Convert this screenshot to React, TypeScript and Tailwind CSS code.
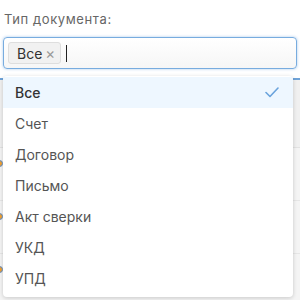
const options = ["Все", "Счет", "Договор", "Письмо", "Акт сверки", "УКД", "УПД"]

export default function App() {
    const selected = "Все"

    return (
        <div className="relative w-[300px] h-[300px] overflow-hidden bg-white font-['Inter','Noto_Sans',sans-serif]">
            {/* Field */}
            <div className="px-[3px] pt-[9px]">
                <label className="block pl-[1px] text-[13px] leading-[20px] text-[#666] tracking-[0.6px]">
                    Тип документа:
                </label>
                <div className="mt-[8px] h-[32px] flex items-center gap-[5px] pl-[4px] rounded-[4px] border border-[#78acdf] bg-gradient-to-b from-white to-[#f6f6f6] shadow-[0_0_3px_rgba(110,165,225,0.6)]">
                    <span className="flex items-center h-[22px] pl-[8px] pr-[5px] gap-[3px] rounded-[3px] border border-[#dedede] bg-[#f1f1f1] text-[14px] text-[#333]">
                        Все
                        <span className="text-[15px] text-[#999] leading-none">×</span>
                    </span>
                    <span className="w-[1px] h-[17px] bg-[#222]" />
                </div>
            </div>

            {/* Table underneath */}
            <div className="mt-[9px]">
                <div className="h-[2px] bg-[#6fa3d8]" />
                <div className="h-[68px] bg-[#f0f0f0] border-b border-[#e2e2e2]" />
                {[0, 1, 2].map((i) => (
                    <div key={i} className="relative h-[53px] border-b border-[#e6e6e6] bg-[#f4f4f4]">
                        <span className="absolute left-[-4px] top-[12px] w-[7px] h-[7px] rounded-full bg-[#f0a030] border border-[#5b8fd0]" />
                    </div>
                ))}
            </div>

            {/* Dropdown */}
            <div className="absolute left-[3px] top-[76px] w-[290px] h-[221px] bg-white rounded-[4px] shadow-[0_1px_4px_rgba(0,0,0,0.18)] overflow-hidden py-[1px]">
                {options.map((o) => (
                    <div
                        key={o}
                        className={
                            o === selected
                                ? "flex items-center justify-between h-[31px] pl-[12px] pr-[14px] bg-[#eef7ff] text-[14px] text-[#333] font-medium"
                                : "flex items-center h-[31px] pl-[12px] text-[14px] text-[#555]"
                        }
                    >
                        {o}
                        {o === selected && (
                            <svg width="14" height="11" viewBox="0 0 14 11" fill="none" className="text-[#6aa3dc]">
                                <polyline points="1,5.5 5,9.5 13,1" stroke="currentColor" strokeWidth="1.6" strokeLinecap="round" strokeLinejoin="round" />
                            </svg>
                        )}
                    </div>
                ))}
            </div>
        </div>
    )
}
